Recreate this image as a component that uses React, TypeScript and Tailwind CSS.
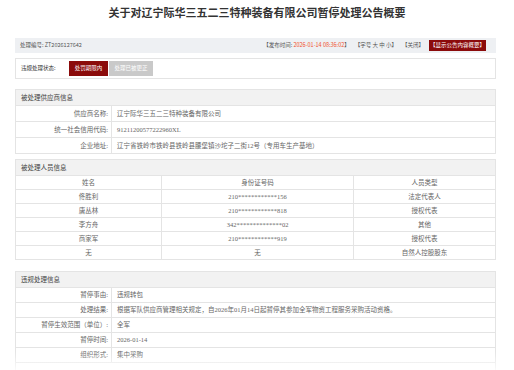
import React from "react";

const supplierRows = [
  { label: "供应商名称:", value: "辽宁际华三五二三特种装备有限公司" },
  { label: "统一社会信用代码:", value: "91211200577222960XL" },
  {
    label: "企业地址:",
    value: "辽宁省铁岭市铁岭县铁岭县腰堡镇沙坨子二街12号（专用车生产基地）",
  },
];

const people = [
  { name: "佟胜利", id: "210************156", type: "法定代表人" },
  { name: "唐丛林", id: "210************818", type: "授权代表" },
  { name: "李方舟", id: "342**************02", type: "其他" },
  { name: "商家军", id: "210************919", type: "授权代表" },
  { name: "无", id: "无", type: "自然人控股股东" },
];

const handleRows = [
  { label: "暂停事由:", value: "违规转包" },
  {
    label: "处理结果:",
    value:
      "根据军队供应商管理相关规定，自2026年01月14日起暂停其参加全军物资工程服务采购活动资格。",
  },
  { label: "暂停生效范围（单位）:", value: "全军" },
  { label: "暂停时间:", value: "2026-01-14" },
  { label: "组织形式:", value: "集中采购" },
];

const serif = "font-['Liberation_Serif','Noto_Sans_CJK_SC',serif]";

const SectionHeader = ({ title }: { title: string }) => (
  <div className="flex h-[15px] items-center bg-[#f2f2f2] px-[5px] text-[6.5px] text-[#444]">
    {title}
  </div>
);

const LabelRow = ({ label, value }: { label: string; value: string }) => (
  <div className="flex border-t border-[#e4e4e4] bg-white">
    <div className="flex w-[95px] shrink-0 items-center justify-end pr-[3px]">
      {label}
    </div>
    <div className="flex flex-1 items-center border-l border-[#e4e4e4] pl-[5px]">
      {value}
    </div>
  </div>
);

export default function App() {
  return (
    <div className="relative h-[370px] w-[514px] overflow-hidden bg-white font-['Noto_Sans_CJK_SC',sans-serif]">
      {/* title */}
      <div className="flex h-[25px] items-center justify-center text-[11px] font-bold text-[#333]">
        关于对辽宁际华三五二三特种装备有限公司暂停处理公告概要
      </div>

      <div className="mx-[15px] mt-[13px] w-[481px]">
        {/* info bar */}
        <div className="flex h-[15px] items-center justify-between bg-[#eef0f3] pl-[5px] pr-[10px] text-[5.5px] text-[#555]">
          <span>处理编号: ZT2026127642</span>
          <div className="flex items-center gap-[5px]">
            <span>
              【发布时间: <span className="text-[#f0502d]">2026-01-14 08:36:02</span>】
            </span>
            <span>【字号 大 中 小】</span>
            <span>【关闭】</span>
            <span className="flex h-[11px] items-center bg-[#8b0b0b] px-[1px] text-white">
              【显示公告内容概要】
            </span>
          </div>
        </div>

        {/* status */}
        <div className="mt-[5px] flex h-[21px] items-center border border-[#e4e4e4] pl-[5px] text-[5.5px] text-[#333]">
          <span className="w-[48px]">违规处理状态:</span>
          <span className="flex h-[15px] w-[39px] items-center justify-center bg-[#8b0b0b] text-white">
            处罚期限内
          </span>
          <span className="ml-[1px] flex h-[15px] w-[44px] items-center justify-center bg-[#c9c9c9] text-white">
            处理已被更正
          </span>
        </div>

        {/* supplier */}
        <div className={`mt-[10px] border border-[#e4e4e4] text-[6.5px] text-[#666] ${serif}`}>
          <SectionHeader title="被处理供应商信息" />
          {supplierRows.map((r) => (
            <div key={r.label} className="h-[16px] [&>div]:h-[16px]">
              <LabelRow label={r.label} value={r.value} />
            </div>
          ))}
        </div>

        {/* people */}
        <div className={`mt-[5px] border border-[#e4e4e4] text-[6.5px] text-[#666] ${serif}`}>
          <SectionHeader title="被处理人员信息" />
          <div className="grid h-[14px] grid-cols-[145px_192px_1fr] border-t border-[#e4e4e4] bg-white text-center">
            <div className="flex items-center justify-center">姓名</div>
            <div className="flex items-center justify-center border-l border-[#e4e4e4]">身份证号码</div>
            <div className="flex items-center justify-center border-l border-[#e4e4e4]">人员类型</div>
          </div>
          {people.map((p) => (
            <div
              key={p.name}
              className="grid h-[14px] grid-cols-[145px_192px_1fr] border-t border-[#e4e4e4] bg-white text-center"
            >
              <div className="flex items-center justify-center">{p.name}</div>
              <div className="flex items-center justify-center border-l border-[#e4e4e4]">{p.id}</div>
              <div className="flex items-center justify-center border-l border-[#e4e4e4]">{p.type}</div>
            </div>
          ))}
        </div>

        {/* handling */}
        <div className={`mt-[11px] border border-[#e4e4e4] text-[6.5px] text-[#666] ${serif}`}>
          <SectionHeader title="违规处理信息" />
          {handleRows.map((r) => (
            <div key={r.label} className="h-[15px] [&>div]:h-[15px]">
              <LabelRow label={r.label} value={r.value} />
            </div>
          ))}
          <div className="h-[15px] border-t border-[#e4e4e4] bg-white" />
        </div>
      </div>

      {/* bottom fade */}
      <div className="absolute bottom-0 left-0 h-[18px] w-full bg-gradient-to-b from-white/0 to-white/80" />
    </div>
  );
}
